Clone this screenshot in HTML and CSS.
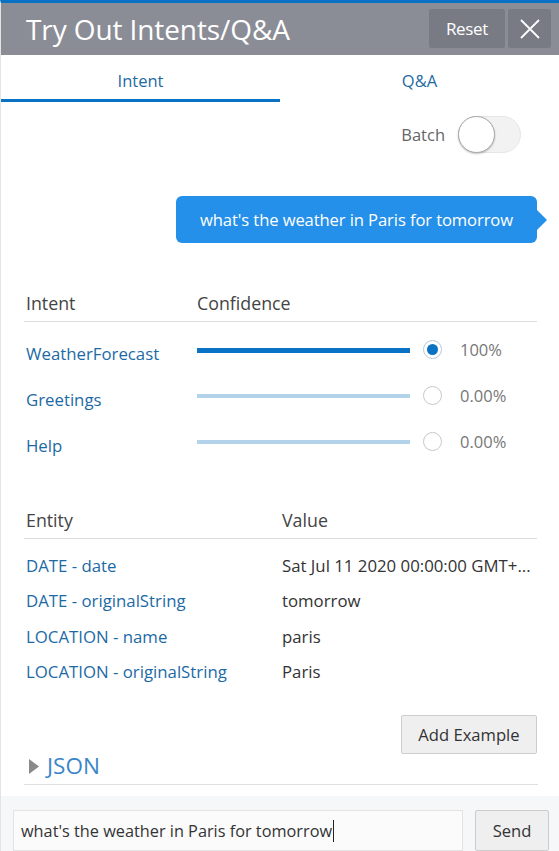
FILE: index.html
```html
<!DOCTYPE html>
<html lang="en">
<head>
<meta charset="utf-8">
<title>Try Out Intents/Q&amp;A</title>
<link rel="stylesheet" href="styles.css">
</head>
<body>
<div class="panel">
  <header class="titlebar">
    <h1 class="title">Try Out Intents/Q&amp;A</h1>
    <div class="actions">
      <button class="hbtn reset">Reset</button>
      <button class="hbtn close" aria-label="Close">
        <svg width="22" height="22" viewBox="0 0 22 22"><path d="M2 2 L20 20 M20 2 L2 20" stroke="#fff" stroke-width="1.8" fill="none"/></svg>
      </button>
    </div>
  </header>
  <nav class="tabs">
    <div class="tab active">Intent</div>
    <div class="tab">Q&amp;A</div>
  </nav>
  <main class="content">
    <div class="batch">
      <span class="batch-label">Batch</span>
      <span class="toggle"><span class="knob"></span></span>
    </div>
    <div class="bubble-row">
      <div class="bubble">what's the weather in Paris for tomorrow</div>
    </div>
    <div class="intents">
      <div class="ihead">
        <span>Intent</span><span>Confidence</span>
      </div>
      <div class="irow">
        <span class="link">WeatherForecast</span>
        <span class="bar full"></span>
        <span class="radio checked"></span>
        <span class="pct">100%</span>
      </div>
      <div class="irow">
        <span class="link">Greetings</span>
        <span class="bar"></span>
        <span class="radio"></span>
        <span class="pct">0.00%</span>
      </div>
      <div class="irow">
        <span class="link">Help</span>
        <span class="bar"></span>
        <span class="radio"></span>
        <span class="pct">0.00%</span>
      </div>
    </div>
    <div class="entities">
      <div class="ehead"><span>Entity</span><span>Value</span></div>
      <div class="erow"><span class="link">DATE - date</span><span class="val">Sat Jul 11 2020 00:00:00 GMT+...</span></div>
      <div class="erow"><span class="link">DATE - originalString</span><span class="val">tomorrow</span></div>
      <div class="erow"><span class="link">LOCATION - name</span><span class="val">paris</span></div>
      <div class="erow"><span class="link">LOCATION - originalString</span><span class="val">Paris</span></div>
    </div>
    <div class="add-row"><button class="btn add">Add Example</button></div>
    <div class="json">
      <svg class="tri" width="10" height="15" viewBox="0 0 10 15"><path d="M0 0 L10 7.5 L0 15 Z" fill="#8a8a8a"/></svg>
      <span class="json-label">JSON</span>
    </div>
  </main>
  <footer class="footer">
    <div class="input">what's the weather in Paris for tomorrow<span class="caret"></span></div>
    <button class="btn send">Send</button>
  </footer>
</div>
</body>
</html>
```
FILE: styles.css
```css
* { box-sizing: border-box; }
html, body { margin: 0; padding: 0; }
body {
  font-family: "Open Sans", "Noto Sans", sans-serif;
  color: #333;
  background: #fff;
}
.panel {
  width: 559px;
  height: 851px;
  display: flex;
  flex-direction: column;
  border-top: 3px solid #0a72c4;
  border-left: 1px solid #e4e4e4;
  overflow: hidden;
}
.titlebar {
  height: 52px;
  background: #8b8d96;
  display: flex;
  align-items: center;
  justify-content: space-between;
  padding: 0 8px 0 25px;
  flex-shrink: 0;
}
.title {
  margin: 0;
  font-weight: 400;
  font-size: 28px;
  color: #fff;
  letter-spacing: -0.1px;
}
.actions { display: flex; gap: 3px; align-self: flex-start; margin-top: 6px; }
.hbtn {
  height: 39px;
  border: none;
  background: #797b84;
  color: #fff;
  font-family: inherit;
  border-radius: 2px;
  padding: 0;
}
.reset { width: 76px; font-size: 17px; letter-spacing: -0.3px; }
.close { width: 43px; display: flex; align-items: center; justify-content: center; }
.tabs {
  display: flex;
  height: 47px;
  flex-shrink: 0;
}
.tab {
  flex: 1;
  display: flex;
  align-items: center;
  justify-content: center;
  padding-top: 6px;
  font-size: 16.5px;
  color: #1e6aa3;
  border-bottom: 3px solid transparent;
}
.tab.active { border-bottom-color: #0a72c4; }
.content {
  flex: 1;
  padding: 0 22px 0 23px;
  display: flex;
  flex-direction: column;
}
.batch {
  display: flex;
  justify-content: flex-end;
  align-items: center;
  gap: 13px;
  margin-top: 14px;
  padding-right: 16px;
}
.batch-label { font-size: 16.5px; color: #666; }
.toggle {
  width: 63px;
  height: 37px;
  border-radius: 19px;
  background: #f2f2f2;
  border: 1px solid #e6e6e6;
  position: relative;
}
.knob {
  position: absolute;
  left: -1px;
  top: -1px;
  width: 37px;
  height: 37px;
  border-radius: 50%;
  background: #fff;
  border: 1px solid #a8a8a8;
  box-shadow: 0 1px 2px rgba(0,0,0,0.25);
}
.bubble-row {
  display: flex;
  justify-content: flex-end;
  margin-top: 43px;
}
.bubble {
  position: relative;
  background: #2590ea;
  color: #fff;
  font-size: 16.6px;
  height: 47px;
  width: 361px;
  border-radius: 6px;
  display: flex;
  align-items: center;
  justify-content: center;
  letter-spacing: -0.1px;
}
.bubble::after {
  content: "";
  position: absolute;
  right: -10px;
  top: 14px;
  border-left: 10px solid #2590ea;
  border-top: 10px solid transparent;
  border-bottom: 10px solid transparent;
}
.intents { margin-top: 42px; }
.ihead, .ehead {
  display: grid;
  border-bottom: 1px solid #dcdcdc;
  font-size: 17.8px;
  color: #444;
  align-items: center;
}
.ihead { grid-template-columns: 171px 1fr; height: 37px; padding-left: 2px; }
.irow {
  display: grid;
  grid-template-columns: 171px 213px 50px 1fr;
  align-items: center;
  height: 46px;
  padding-left: 2px;
  font-size: 16.8px;
}
.ihead + .irow { margin-top: 8px; }
.link { color: #1c6aa5; }
.bar {
  height: 4px;
  background: #b3d3ea;
  margin-top: -6px;
}
.bar.full { background: #0a72c4; height: 5px; }
.radio {
  width: 19px;
  height: 19px;
  border-radius: 50%;
  border: 1px solid #c8c8c8;
  background: #fff;
  justify-self: center;
  margin-left: -6px;
  margin-top: -8px;
  position: relative;
}
.radio.checked { border-color: #b6c8dc; }
.radio.checked::after {
  content: "";
  position: absolute;
  left: 3px; top: 3px;
  width: 11px; height: 11px;
  border-radius: 50%;
  background: #0a72c4;
}
.pct { color: #777; font-size: 16.5px; margin-top: -8px; }
.entities { margin-top: 34px; }
.ehead { grid-template-columns: 256px 1fr; height: 37px; padding-left: 2px; }
.erow {
  display: grid;
  grid-template-columns: 256px 1fr;
  align-items: center;
  height: 35.3px;
  padding-left: 2px;
  font-size: 16.8px;
}
.ehead + .erow { margin-top: 9px; }
.val {
  color: #333;
  white-space: nowrap;
  min-width: 0;
}
.add-row {
  display: flex;
  justify-content: flex-end;
  margin-top: 26px;
}
.btn {
  font-family: inherit;
  background: #efefef;
  border: 1px solid #cdcdcd;
  border-radius: 2px;
  color: #333;
  font-size: 16.6px;
  padding: 0;
}
.add { width: 136px; height: 39px; }
.json {
  display: flex;
  align-items: center;
  gap: 8px;
  height: 31px;
  padding-left: 5px;
  padding-bottom: 7px;
  border-bottom: 1px solid #e0e0e0;
  margin-right: -1px;
}
.tri { margin-top: 1px; }
.json-label { color: #3a86c8; font-size: 22.5px; }
.footer {
  flex-shrink: 0;
  height: 57px;
  background: #f6f7f8;
  display: flex;
  gap: 12px;
  padding: 14px 9px 0 12px;
  margin-top: 11px;
}
.input {
  width: 450px;
  height: 41px;
  background: #fbfbfc;
  border: 1px solid #e3e3e3;
  font-size: 16.3px;
  color: #333;
  display: flex;
  align-items: center;
  padding-left: 7px;
  white-space: nowrap;
}
.caret {
  display: inline-block;
  width: 1px;
  height: 22px;
  background: #222;
  margin-left: 1px;
}
.send { width: 74px; height: 41px; }
```
